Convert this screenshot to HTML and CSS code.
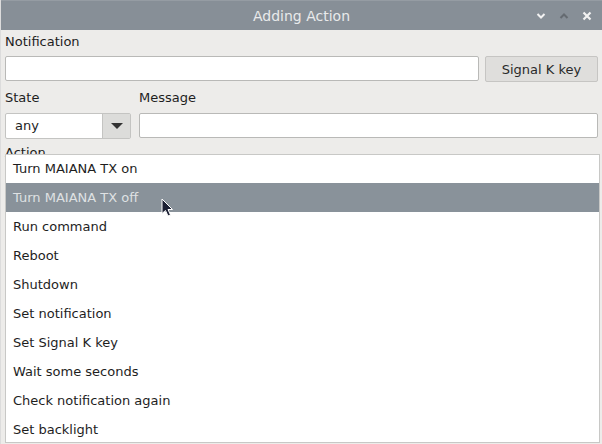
FILE: index.html
```html
<!DOCTYPE html>
<html>
<head>
<meta charset="utf-8">
<link rel="stylesheet" href="styles.css">
</head>
<body>
<div class="window">
  <div class="titlebar">
    <span class="title">Adding Action</span>
    <div class="controls">
      <svg class="ctl" width="10" height="8" viewBox="0 0 10 8"><path d="M1.5 2 L5 5.5 L8.5 2" fill="none" stroke="#f2f2f2" stroke-width="2"/></svg>
      <svg class="ctl" width="10" height="8" viewBox="0 0 10 8"><path d="M1.5 6 L5 2.5 L8.5 6" fill="none" stroke="#656b71" stroke-width="2"/></svg>
      <svg class="ctl" width="10" height="10" viewBox="0 0 10 10"><path d="M1.5 1.5 L8.5 8.5 M8.5 1.5 L1.5 8.5" fill="none" stroke="#f2f2f2" stroke-width="2.2"/></svg>
    </div>
  </div>
  <div class="content">
    <div class="label">Notification</div>
    <div class="row">
      <div class="input grow"></div>
      <div class="button">Signal K key</div>
    </div>
    <div class="row2">
      <div class="col-state">
        <div class="label">State</div>
        <div class="combo">
          <div class="combo-text">any</div>
          <div class="combo-arrow"><svg width="12" height="6" viewBox="0 0 12 6"><path d="M0 0 H12 L6 6 Z" fill="#333"/></svg></div>
        </div>
      </div>
      <div class="col-msg">
        <div class="label">Message</div>
        <div class="input msg"></div>
      </div>
    </div>
    <div class="label action">Action</div>
  </div>
  <div class="popup">
    <div class="item first">Turn MAIANA TX on</div>
    <div class="item sel">Turn MAIANA TX off</div>
    <div class="item">Run command</div>
    <div class="item">Reboot</div>
    <div class="item">Shutdown</div>
    <div class="item">Set notification</div>
    <div class="item">Set Signal K key</div>
    <div class="item">Wait some seconds</div>
    <div class="item">Check notification again</div>
    <div class="item">Set backlight</div>
  </div>
  <svg class="cursor" width="14" height="20" viewBox="0 0 14 20"><path d="M1 1 L1 15.5 L4.5 12.5 L7 18 L9.5 17 L7 11.5 L11.5 11.5 Z" fill="#1b1f33" stroke="#ffffff" stroke-width="1" stroke-linejoin="round"/></svg>
</div>
</body>
</html>
```

FILE: styles.css
```css
* { box-sizing: border-box; }
html, body { margin: 0; padding: 0; }
body {
  width: 602px;
  height: 444px;
  overflow: hidden;
  font-family: "DejaVu Sans", sans-serif;
  font-size: 13px;
  color: #1e1e1e;
  background: #edecea;
}
.window {
  position: relative;
  width: 602px;
  height: 444px;
  background: #edecea;
  border-left: 1px solid #dcdcdc;
}
.titlebar {
  height: 30px;
  background: #878f97;
  border-top: 1px solid #959ca3;
  display: flex;
  align-items: center;
  justify-content: center;
  position: relative;
}
.title {
  font-size: 14px;
  color: #e9eaeb;
  font-family: "DejaVu Sans", sans-serif;
}
.controls {
  position: absolute;
  right: 10px;
  top: 0;
  height: 29px;
  display: flex;
  align-items: center;
  gap: 13px;
}
.ctl { display: block; }
.content {
  padding: 3px 4px 0 4px;
}
.label {
  line-height: 18px;
  height: 18px;
  padding-left: 0;
}
.row {
  display: flex;
  gap: 6px;
  margin-top: 5px;
}
.input {
  height: 25px;
  background: #ffffff;
  border: 1px solid #b9b9b7;
  border-radius: 2px;
}
.grow { flex: 1; }
.button {
  width: 113px;
  height: 26px;
  background: #dfdedc;
  border: 1px solid #c6c5c3;
  border-radius: 2px;
  display: flex;
  align-items: center;
  justify-content: center;
  color: #2a2a2a;
}
.row2 {
  display: flex;
  gap: 8px;
  margin-top: 7px;
}
.col-state { width: 126px; }
.col-msg { flex: 1; }
.row2 .label { margin-bottom: 6px; }
.combo {
  display: flex;
  height: 26px;
  border: 1px solid #c4c4c2;
  border-radius: 2px;
  background: #ffffff;
}
.combo-text {
  flex: 1;
  padding-left: 9px;
  line-height: 24px;
}
.combo-arrow {
  width: 28px;
  background: #dcdcda;
  border-left: 1px solid #c4c4c2;
  display: flex;
  align-items: center;
  justify-content: center;
}
.combo-arrow svg { display: block; }
.msg { height: 25px; }
.action { margin-top: 5px; }
.popup {
  position: absolute;
  left: 4px;
  top: 154px;
  width: 595px;
  height: 289px;
  background: #ffffff;
  border: 1px solid #c8c8c6;
  overflow: hidden;
}
.item {
  height: 29px;
  line-height: 29px;
  padding-left: 7px;
}
.item.first { height: 28px; line-height: 27px; }
.item.sel {
  background: #89929a;
  color: #dfe1e3;
}
.cursor {
  position: absolute;
  left: 160px;
  top: 198px;
}
```
